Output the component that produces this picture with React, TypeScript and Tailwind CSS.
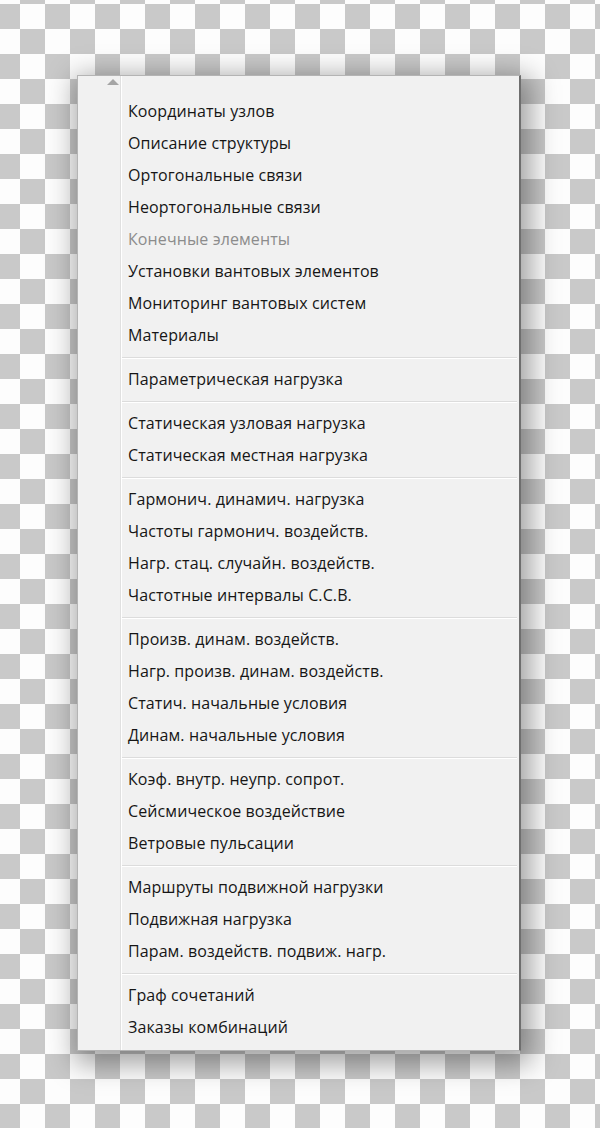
import React from 'react';

type Item = { label: string; disabled?: boolean };

const groups: Item[][] = [
  [
    { label: 'Координаты узлов' },
    { label: 'Описание структуры' },
    { label: 'Ортогональные связи' },
    { label: 'Неортогональные связи' },
    { label: 'Конечные элементы', disabled: true },
    { label: 'Установки вантовых элементов' },
    { label: 'Мониторинг вантовых систем' },
    { label: 'Материалы' },
  ],
  [{ label: 'Параметрическая нагрузка' }],
  [{ label: 'Статическая узловая нагрузка' }, { label: 'Статическая местная нагрузка' }],
  [
    { label: 'Гармонич. динамич. нагрузка' },
    { label: 'Частоты гармонич. воздейств.' },
    { label: 'Нагр. стац. случайн. воздейств.' },
    { label: 'Частотные интервалы С.С.В.' },
  ],
  [
    { label: 'Произв. динам. воздейств.' },
    { label: 'Нагр. произв. динам. воздейств.' },
    { label: 'Статич. начальные условия' },
    { label: 'Динам. начальные условия' },
  ],
  [
    { label: 'Коэф. внутр. неупр. сопрот.' },
    { label: 'Сейсмическое воздействие' },
    { label: 'Ветровые пульсации' },
  ],
  [
    { label: 'Маршруты подвижной нагрузки' },
    { label: 'Подвижная нагрузка' },
    { label: 'Парам. воздейств. подвиж. нагр.' },
  ],
  [{ label: 'Граф сочетаний' }, { label: 'Заказы комбинаций' }],
];

function MenuRow({ item }: { item: Item }) {
  return (
    <div
      className={`h-8 flex items-center pl-[50px] pb-[3px] text-[16px] tracking-[0.1px] leading-none ${
        item.disabled ? 'text-[#8c8c8c]' : 'text-[#161616]'
      }`}
    >
      {item.label}
    </div>
  );
}

export default function App() {
  return (
    <div className="w-[600px] h-[1128px] overflow-hidden pt-[75px] pl-[77px] bg-[#fdfdfd] bg-[image:repeating-conic-gradient(#c9c9c9_0_25%,#fdfdfd_0_50%)] bg-[length:50px_50px] bg-[position:-5px_-21px] font-['Open_Sans','Noto_Sans',sans-serif]">
      <div className="relative w-[444px] h-[976px] bg-[#f1f1f1] border border-[#b4b4b4] border-r-2 border-r-[#6e6e6e] shadow-[4px_7px_26px_6px_rgba(0,0,0,0.36)]">
        {/* gutter line */}
        <div className="absolute top-0 bottom-0 left-[42px] w-[2px] flex">
          <div className="w-px bg-[#e0e0e0]" />
          <div className="w-px bg-white" />
        </div>
        {/* scroll up arrow */}
        <div className="h-5 pl-[29px] pt-[3px]">
          <svg width="12" height="6" viewBox="0 0 12 6">
            <path d="M0 6 L6 0 L12 6 Z" fill="#a5a5a5" />
          </svg>
        </div>
        {groups.map((g, gi) => (
          <div key={gi}>
            {gi > 0 && (
              <div className="h-3 flex flex-col justify-center pl-[43px] pr-[2px]">
                <div className="h-px bg-[#dcdcdc]" />
                <div className="h-px bg-white" />
              </div>
            )}
            {g.map((it) => (
              <MenuRow key={it.label} item={it} />
            ))}
          </div>
        ))}
      </div>
    </div>
  );
}
